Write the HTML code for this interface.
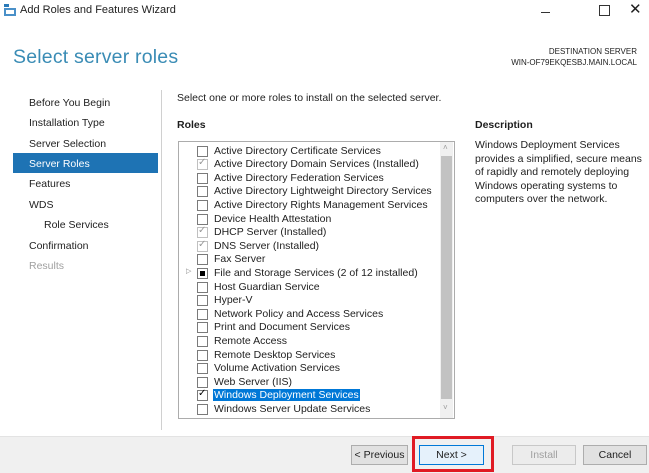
<!DOCTYPE html><html><head><style>
body{margin:0;width:649px;height:472px;background:#fff;font-family:"Liberation Sans",sans-serif;font-size:10.5px;color:#1e1e1e;position:relative;overflow:hidden}
.a{position:absolute;white-space:nowrap}
.nav{left:29px}
.row{position:absolute;left:197px;height:13px}
.cb{position:absolute;left:0;top:1px;width:9px;height:9px;border:1px solid #7a7a7a;background:#fff}
.cb.g{border-color:#c0c0c0}
.t{position:absolute;left:17px;top:0;white-space:nowrap;line-height:12px}
.btn{position:absolute;top:445px;height:18px;border:1px solid #adadad;background:#e1e1e1;text-align:center;line-height:18px;font-size:10.5px}
</style></head><body>
<svg class="a" style="left:4px;top:4px" width="12" height="12"><rect x="0" y="0" width="5" height="3" fill="#2a7ab8"/><rect x="0" y="4" width="12" height="8" fill="#4a90c8"/><rect x="2" y="6" width="8" height="4" fill="#fff"/></svg>
<div class="a" style="left:20px;top:4px;font-size:11px">Add Roles and Features Wizard</div>
<div class="a" style="left:541px;top:4px;width:9px;height:1px;top:12px;background:#333"></div>
<div class="a" style="left:599px;top:5px;width:9px;height:9px;border:1px solid #333"></div>
<div class="a" style="left:629px;top:0px;font-size:15px">✕</div>
<div class="a" style="left:13px;top:46px;font-size:19.5px;color:#3a8cb5;letter-spacing:0.2px">Select server roles</div>
<div class="a" style="right:12px;top:46px;font-size:8px;text-align:right;line-height:11px">DESTINATION SERVER<br>WIN-OF79EKQESBJ.MAIN.LOCAL</div>
<div class="a" style="left:161px;top:90px;width:1px;height:340px;background:#d0d0d0"></div>
<div class="a" style="left:13px;top:153px;width:145px;height:20px;background:#1e73b4"></div>
<div class="a nav" style="top:97px">Before You Begin</div>
<div class="a nav" style="top:117px">Installation Type</div>
<div class="a nav" style="top:138px">Server Selection</div>
<div class="a nav" style="top:158px;color:#fff">Server Roles</div>
<div class="a nav" style="top:178px">Features</div>
<div class="a nav" style="top:199px">WDS</div>
<div class="a" style="left:44px;top:219px">Role Services</div>
<div class="a nav" style="top:240px">Confirmation</div>
<div class="a nav" style="top:260px;color:#a0a0a0">Results</div>
<div class="a" style="left:177px;top:92px">Select one or more roles to install on the selected server.</div>
<div class="a" style="left:177px;top:119px;font-weight:bold">Roles</div>
<div class="a" style="left:475px;top:119px;font-weight:bold">Description</div>
<div class="a" style="left:475px;top:139px;line-height:13.5px;white-space:normal;width:170px">Windows Deployment Services provides a simplified, secure means of rapidly and remotely deploying Windows operating systems to computers over the network.</div>
<div class="a" style="left:178px;top:141px;width:275px;height:276px;border:1px solid #acacac"></div>
<div class="a" style="left:440px;top:142px;width:13px;height:276px;background:#f0f0f0"></div>
<div class="a" style="left:441px;top:156px;width:11px;height:243px;background:#c2c2c2"></div>
<div class="a" style="left:443px;top:143px;font-size:8px;color:#999">˄</div>
<div class="a" style="left:443px;top:403px;font-size:8px;color:#999">˅</div>
<div class="a" style="left:186px;top:267px;font-size:7px;color:#888">▷</div>
<div id="list"></div>
<script>
var r=[["Active Directory Certificate Services",0],["Active Directory Domain Services (Installed)",1],["Active Directory Federation Services",0],["Active Directory Lightweight Directory Services",0],["Active Directory Rights Management Services",0],["Device Health Attestation",0],["DHCP Server (Installed)",1],["DNS Server (Installed)",1],["Fax Server",0],["File and Storage Services (2 of 12 installed)",2],["Host Guardian Service",0],["Hyper-V",0],["Network Policy and Access Services",0],["Print and Document Services",0],["Remote Access",0],["Remote Desktop Services",0],["Volume Activation Services",0],["Web Server (IIS)",0],["Windows Deployment Services",3],["Windows Server Update Services",0]];
var h="";r.forEach(function(x,i){var y=144.5+i*13.6;var c='<div class="cb'+(x[1]==1?' g':'')+'">'+(x[1]==1?'<span style="position:absolute;left:0;top:-3px;color:#999;font-size:10px">✓</span>':x[1]==3?'<span style="position:absolute;left:0;top:-3px;color:#000;font-size:10px">✓</span>':x[1]==2?'<div style="position:absolute;left:2px;top:2px;width:5px;height:5px;background:#000"></div>':'')+'</div>';
var t=x[1]==3?'<div class="t" style="background:#0078d7;color:#fff;padding:0 1px;left:16px">'+x[0]+'</div>':'<div class="t">'+x[0]+'</div>';
h+='<div class="row" style="top:'+y+'px">'+c+t+'</div>';});document.getElementById("list").innerHTML=h;
</script>
<div class="a" style="left:0;top:436px;width:649px;height:36px;background:#f0f0f0;border-top:1px solid #e3e3e3"></div>
<div class="btn" style="left:351px;width:55px">&lt; Previous</div>
<div class="a" style="left:412px;top:436px;width:76px;height:30px;border:3px solid #e01b24"></div>
<div class="btn" style="left:419px;width:63px;border-color:#0078d7;background:#e5f1fb">Next &gt;</div>
<div class="btn" style="left:512px;width:62px;color:#a0a0a0;background:#ececec;border-color:#c8c8c8">Install</div>
<div class="btn" style="left:583px;width:62px">Cancel</div>
</body></html>
